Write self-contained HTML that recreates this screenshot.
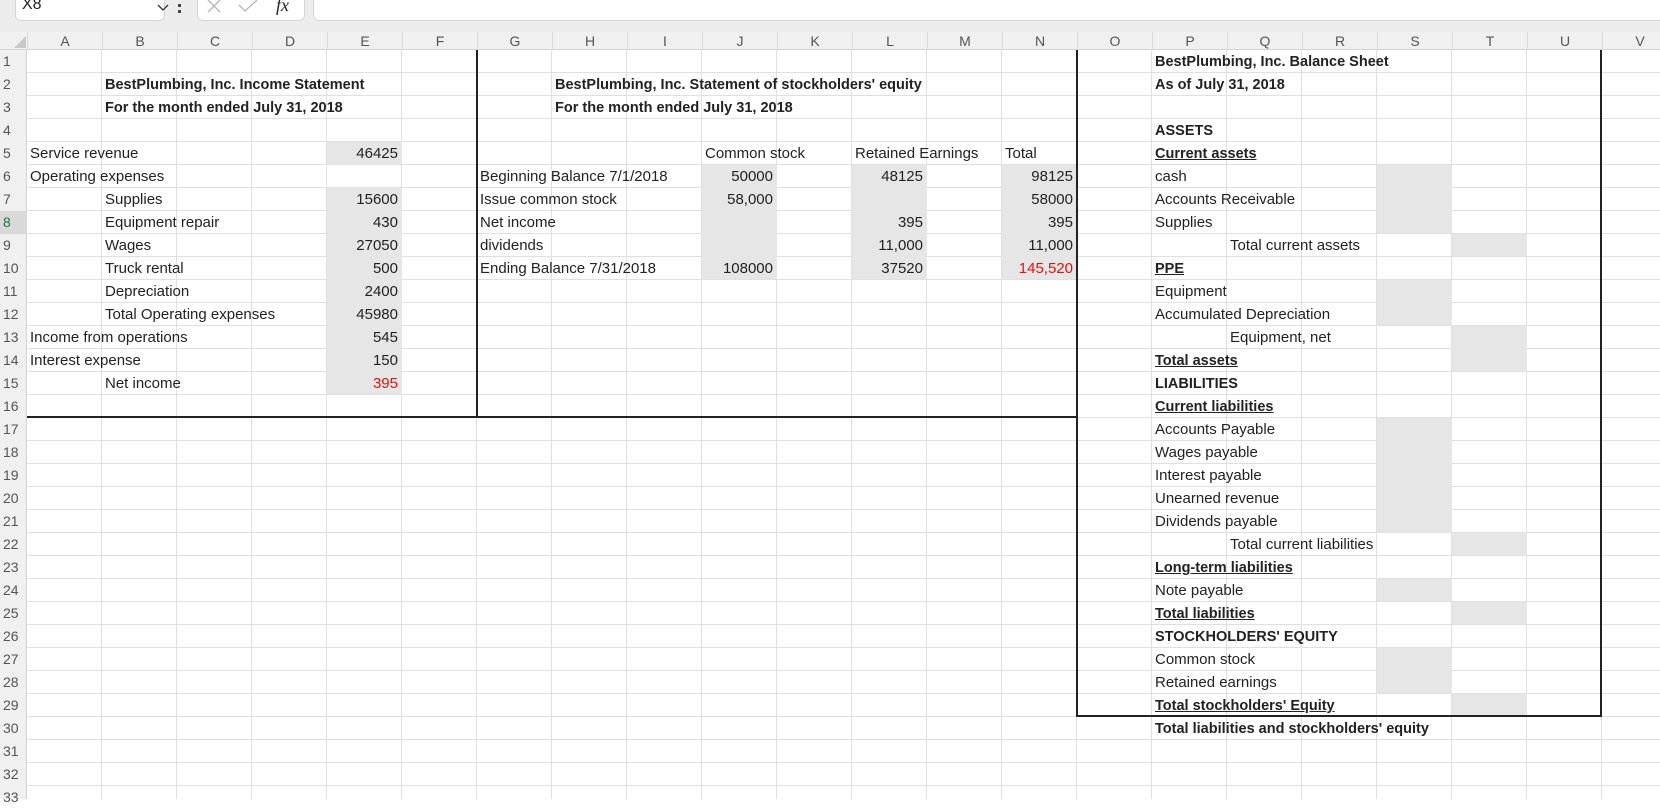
<!DOCTYPE html>
<html><head><meta charset="utf-8">
<style>
*{margin:0;padding:0;box-sizing:border-box}
body{width:1660px;height:799px;overflow:hidden;background:#fff;font-family:"Liberation Sans",Arial,sans-serif;font-size:15px;color:#222;position:relative}
.top{position:absolute;left:0;top:0;width:1660px;height:32px;background:#ececec}
.box{position:absolute;background:#fff;border:1px solid #d6d6d6;border-top:none;border-radius:0 0 6px 6px}
.hdr{position:absolute;left:0;top:32px;width:1660px;height:18px;background:#f0f0f0;border-bottom:1px solid #d4d4d4}
.grid{position:absolute;left:27px;top:50px;width:1633px;height:749px;
background-image:repeating-linear-gradient(to right,transparent 0 74px,#e0e0e0 74px 75px),repeating-linear-gradient(to bottom,transparent 0 22px,#e0e0e0 22px 23px)}
.rh{position:absolute;left:0;top:50px;width:27px;height:749px;background:#f0f0f0;border-right:1px solid #d4d4d4}
.ch{position:absolute;top:32px;height:18px;width:75px;text-align:center;line-height:18px;color:#555;font-size:14px;border-left:1px solid #dadada}
.rn{position:absolute;left:3px;width:24px;height:23px;line-height:23px;color:#555;font-size:14px}
.g{position:absolute;width:75px;height:22px;background:#e6e6e6}
.c{position:absolute;height:23px;line-height:24px;white-space:nowrap}
.r{position:absolute;width:75px;height:23px;line-height:24px;text-align:right;padding-right:4px;white-space:nowrap}
.b{font-weight:bold;font-size:14.5px}
.u{text-decoration:underline;font-weight:bold;font-size:14.5px}
.red{color:#e81010}
.tl{position:absolute;background:#222}
</style></head><body>
<div class="top"></div>
<div class="box" style="left:15px;top:0;width:150px;height:21px"><span style="position:absolute;left:6px;top:-4px;font-size:16px">X8</span><svg style="position:absolute;left:141px;top:4px" width="12" height="8" viewBox="0 0 12 8"><path d="M1 1 L6 6 L11 1" stroke="#333" stroke-width="1.3" fill="none"/></svg></div>
<div style="position:absolute;left:178px;top:4px;width:3px;height:3px;background:#444"></div>
<div style="position:absolute;left:178px;top:10px;width:3px;height:3px;background:#444"></div>
<div class="box" style="left:197px;top:0;width:108px;height:21px">
<svg style="position:absolute;left:8px;top:0" width="16" height="14" viewBox="0 0 16 14"><path d="M2 0 L14 12 M14 0 L2 12" stroke="#b5b5b5" stroke-width="1.3"/></svg>
<svg style="position:absolute;left:40px;top:0" width="20" height="14" viewBox="0 0 20 14"><path d="M1 5 L7 11 L19 0" stroke="#b5b5b5" stroke-width="1.3" fill="none"/></svg>
<span style="position:absolute;left:78px;top:-5px;font-family:'Liberation Serif',serif;font-style:italic;font-size:18px">fx</span></div>
<div class="box" style="left:313px;top:0;width:1360px;height:21px"></div>
<div class="hdr"></div>
<div class="grid"></div>
<div class="rh"></div>
<div style="position:absolute;left:0;top:211px;width:27px;height:23px;background:#d9d9d9"></div>
<svg style="position:absolute;left:14px;top:36px" width="12" height="12"><path d="M12 0 L12 12 L0 12 Z" fill="#c8c8c8"/></svg>

<div class="ch" style="left:27px">A</div><div class="ch" style="left:102px">B</div><div class="ch" style="left:177px">C</div><div class="ch" style="left:252px">D</div><div class="ch" style="left:327px">E</div><div class="ch" style="left:402px">F</div><div class="ch" style="left:477px">G</div><div class="ch" style="left:552px">H</div><div class="ch" style="left:627px">I</div><div class="ch" style="left:702px">J</div><div class="ch" style="left:777px">K</div><div class="ch" style="left:852px">L</div><div class="ch" style="left:927px">M</div><div class="ch" style="left:1002px">N</div><div class="ch" style="left:1077px">O</div><div class="ch" style="left:1152px">P</div><div class="ch" style="left:1227px">Q</div><div class="ch" style="left:1302px">R</div><div class="ch" style="left:1377px">S</div><div class="ch" style="left:1452px">T</div><div class="ch" style="left:1527px">U</div><div class="ch" style="left:1602px">V</div>

<div class="rn" style="top:50px">1</div><div class="rn" style="top:73px">2</div><div class="rn" style="top:96px">3</div><div class="rn" style="top:119px">4</div><div class="rn" style="top:142px">5</div><div class="rn" style="top:165px">6</div><div class="rn" style="top:188px">7</div><div class="rn" style="top:211px;color:#217346">8</div><div class="rn" style="top:234px">9</div><div class="rn" style="top:257px">10</div><div class="rn" style="top:280px">11</div><div class="rn" style="top:303px">12</div><div class="rn" style="top:326px">13</div><div class="rn" style="top:349px">14</div><div class="rn" style="top:372px">15</div><div class="rn" style="top:395px">16</div><div class="rn" style="top:418px">17</div><div class="rn" style="top:441px">18</div><div class="rn" style="top:464px">19</div><div class="rn" style="top:487px">20</div><div class="rn" style="top:510px">21</div><div class="rn" style="top:533px">22</div><div class="rn" style="top:556px">23</div><div class="rn" style="top:579px">24</div><div class="rn" style="top:602px">25</div><div class="rn" style="top:625px">26</div><div class="rn" style="top:648px">27</div><div class="rn" style="top:671px">28</div><div class="rn" style="top:694px">29</div><div class="rn" style="top:717px">30</div><div class="rn" style="top:740px">31</div><div class="rn" style="top:763px">32</div><div class="rn" style="top:786px">33</div>

<div class="g" style="left:327px;top:142px"></div>
<div class="g" style="left:327px;top:188px;height:206px"></div>
<div class="g" style="left:702px;top:165px;height:114px"></div>
<div class="g" style="left:852px;top:165px;height:114px"></div>
<div class="g" style="left:1002px;top:165px;height:114px"></div>
<div class="g" style="left:1377px;top:165px;height:68px"></div>
<div class="g" style="left:1452px;top:234px"></div>
<div class="g" style="left:1377px;top:280px;height:45px"></div>
<div class="g" style="left:1452px;top:326px;height:45px"></div>
<div class="g" style="left:1377px;top:418px;height:114px"></div>
<div class="g" style="left:1452px;top:533px"></div>
<div class="g" style="left:1377px;top:579px"></div>
<div class="g" style="left:1452px;top:602px"></div>
<div class="g" style="left:1377px;top:648px;height:45px"></div>
<div class="g" style="left:1452px;top:694px"></div>

<div class="c b" style="left:105px;top:73px">BestPlumbing, Inc. Income Statement</div>
<div class="c b" style="left:105px;top:96px">For the month ended July 31, 2018</div>
<div class="c" style="left:30px;top:142px">Service revenue</div><div class="r" style="left:327px;top:142px">46425</div>
<div class="c" style="left:30px;top:165px">Operating expenses</div>
<div class="c" style="left:105px;top:188px">Supplies</div><div class="r" style="left:327px;top:188px">15600</div>
<div class="c" style="left:105px;top:211px">Equipment repair</div><div class="r" style="left:327px;top:211px">430</div>
<div class="c" style="left:105px;top:234px">Wages</div><div class="r" style="left:327px;top:234px">27050</div>
<div class="c" style="left:105px;top:257px">Truck rental</div><div class="r" style="left:327px;top:257px">500</div>
<div class="c" style="left:105px;top:280px">Depreciation</div><div class="r" style="left:327px;top:280px">2400</div>
<div class="c" style="left:105px;top:303px">Total Operating expenses</div><div class="r" style="left:327px;top:303px">45980</div>
<div class="c" style="left:30px;top:326px">Income from operations</div><div class="r" style="left:327px;top:326px">545</div>
<div class="c" style="left:30px;top:349px">Interest expense</div><div class="r" style="left:327px;top:349px">150</div>
<div class="c" style="left:105px;top:372px">Net income</div><div class="r red" style="left:327px;top:372px">395</div>

<div class="c b" style="left:555px;top:73px">BestPlumbing, Inc. Statement of stockholders' equity</div>
<div class="c b" style="left:555px;top:96px">For the month ended July 31, 2018</div>
<div class="c" style="left:705px;top:142px">Common stock</div>
<div class="c" style="left:855px;top:142px">Retained Earnings</div>
<div class="c" style="left:1005px;top:142px">Total</div>
<div class="c" style="left:480px;top:165px">Beginning Balance 7/1/2018</div><div class="r" style="left:702px;top:165px">50000</div><div class="r" style="left:852px;top:165px">48125</div><div class="r" style="left:1002px;top:165px">98125</div>
<div class="c" style="left:480px;top:188px">Issue common stock</div><div class="r" style="left:702px;top:188px">58,000</div><div class="r" style="left:1002px;top:188px">58000</div>
<div class="c" style="left:480px;top:211px">Net income</div><div class="r" style="left:852px;top:211px">395</div><div class="r" style="left:1002px;top:211px">395</div>
<div class="c" style="left:480px;top:234px">dividends</div><div class="r" style="left:852px;top:234px">11,000</div><div class="r" style="left:1002px;top:234px">11,000</div>
<div class="c" style="left:480px;top:257px">Ending Balance 7/31/2018</div><div class="r" style="left:702px;top:257px">108000</div><div class="r" style="left:852px;top:257px">37520</div><div class="r red" style="left:1002px;top:257px">145,520</div>

<div class="c b" style="left:1155px;top:50px">BestPlumbing, Inc. Balance Sheet</div>
<div class="c b" style="left:1155px;top:73px">As of July 31, 2018</div>
<div class="c b" style="left:1155px;top:119px">ASSETS</div>
<div class="c u" style="left:1155px;top:142px">Current assets</div>
<div class="c" style="left:1155px;top:165px">cash</div>
<div class="c" style="left:1155px;top:188px">Accounts Receivable</div>
<div class="c" style="left:1155px;top:211px">Supplies</div>
<div class="c" style="left:1230px;top:234px">Total current assets</div>
<div class="c u" style="left:1155px;top:257px">PPE</div>
<div class="c" style="left:1155px;top:280px">Equipment</div>
<div class="c" style="left:1155px;top:303px">Accumulated Depreciation</div>
<div class="c" style="left:1230px;top:326px">Equipment, net</div>
<div class="c u" style="left:1155px;top:349px">Total assets</div>
<div class="c b" style="left:1155px;top:372px">LIABILITIES</div>
<div class="c u" style="left:1155px;top:395px">Current liabilities</div>
<div class="c" style="left:1155px;top:418px">Accounts Payable</div>
<div class="c" style="left:1155px;top:441px">Wages payable</div>
<div class="c" style="left:1155px;top:464px">Interest payable</div>
<div class="c" style="left:1155px;top:487px">Unearned revenue</div>
<div class="c" style="left:1155px;top:510px">Dividends payable</div>
<div class="c" style="left:1230px;top:533px">Total current liabilities</div>
<div class="c u" style="left:1155px;top:556px">Long-term liabilities</div>
<div class="c" style="left:1155px;top:579px">Note payable</div>
<div class="c u" style="left:1155px;top:602px">Total liabilities</div>
<div class="c b" style="left:1155px;top:625px">STOCKHOLDERS' EQUITY</div>
<div class="c" style="left:1155px;top:648px">Common stock</div>
<div class="c" style="left:1155px;top:671px">Retained earnings</div>
<div class="c u" style="left:1155px;top:694px">Total stockholders' Equity</div>
<div class="c b" style="left:1155px;top:717px">Total liabilities and stockholders' equity</div>

<div class="tl" style="left:476px;top:50px;width:2px;height:368px"></div>
<div class="tl" style="left:27px;top:416px;width:1050px;height:2px"></div>
<div class="tl" style="left:1076px;top:50px;width:2px;height:667px"></div>
<div class="tl" style="left:1076px;top:715px;width:526px;height:2px"></div>
<div class="tl" style="left:1600px;top:50px;width:2px;height:667px"></div>
</body></html>
